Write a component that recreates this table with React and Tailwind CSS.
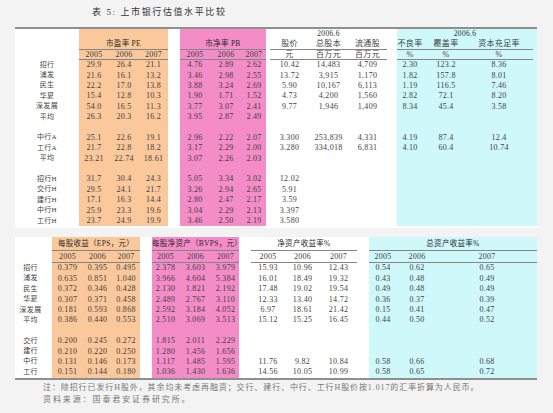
import React from 'react';

const E = ['', '', ''];
const ROW = 'h-[10.4px]';

const topRows = Array(16).fill(ROW);
const botRows = Array(11).fill(ROW);

const topLabels = ['招行', '浦发', '民生', '华夏', '深发展', '平均', '', '中行A', '工行A', '平均', '', '招行H', '交行H', '建行H', '中行H', '工行H'];
const botLabels = ['招行', '浦发', '民生', '华夏', '深发展', '平均', '', '交行', '建行', '中行', '工行'];

const pe = [
  ['29.9', '26.4', '21.1'], ['21.6', '16.1', '13.2'], ['22.2', '17.0', '13.8'], ['15.4', '12.8', '10.3'],
  ['54.0', '16.5', '11.3'], ['26.3', '20.3', '16.2'], E, ['25.1', '22.6', '19.1'], ['21.7', '22.8', '18.2'],
  ['23.21', '22.74', '18.61'], E, ['31.7', '30.4', '24.3'], ['29.5', '24.1', '21.7'], ['17.1', '16.3', '14.4'],
  ['25.9', '23.3', '19.6'], ['23.7', '24.9', '19.9'],
];
const pb = [
  ['4.76', '2.89', '2.62'], ['3.46', '2.98', '2.55'], ['3.88', '3.24', '2.69'], ['1.90', '1.71', '1.52'],
  ['3.77', '3.07', '2.41'], ['3.95', '2.87', '2.49'], E, ['2.96', '2.22', '2.07'], ['3.17', '2.29', '2.00'],
  ['3.07', '2.26', '2.03'], E, ['5.05', '3.34', '3.02'], ['3.26', '2.94', '2.65'], ['2.80', '2.47', '2.17'],
  ['3.04', '2.29', '2.13'], ['3.46', '2.50', '2.19'],
];
const shares = [
  ['10.42', '14,483', '4,709'], ['13.72', '3,915', '1,170'], ['5.90', '10,167', '6,113'], ['4.73', '4,200', '1,560'],
  ['9.77', '1,946', '1,409'], E, E, ['3.300', '253,839', '4,331'], ['3.280', '334,018', '6,831'], E, E,
  ['12.02', '', ''], ['5.91', '', ''], ['3.59', '', ''], ['3.397', '', ''], ['3.580', '', ''],
];
const quality = [
  ['2.30', '123.2', '8.36'], ['1.82', '157.8', '8.01'], ['1.19', '116.5', '7.46'], ['2.82', '72.1', '8.20'],
  ['8.34', '45.4', '3.58'], E, E, ['4.19', '87.4', '12.4'], ['4.10', '60.4', '10.74'], E, E, E, E, E, E, E,
];

const eps = [
  ['0.379', '0.395', '0.495'], ['0.635', '0.851', '1.040'], ['0.372', '0.346', '0.428'], ['0.307', '0.371', '0.458'],
  ['0.181', '0.593', '0.868'], ['0.386', '0.440', '0.553'], E, ['0.200', '0.245', '0.272'], ['0.210', '0.220', '0.250'],
  ['0.131', '0.146', '0.173'], ['0.151', '0.144', '0.180'],
];
const bvps = [
  ['2.378', '3.603', '3.979'], ['3.966', '4.604', '5.384'], ['2.130', '1.821', '2.192'], ['2.489', '2.767', '3.110'],
  ['2.592', '3.184', '4.052'], ['2.510', '3.069', '3.513'], E, ['1.815', '2.011', '2.229'], ['1.280', '1.456', '1.656'],
  ['1.117', '1.485', '1.595'], ['1.036', '1.430', '1.636'],
];
const roe = [
  ['15.93', '10.96', '12.43'], ['16.01', '18.49', '19.32'], ['17.48', '19.02', '19.54'], ['12.33', '13.40', '14.72'],
  ['6.97', '18.61', '21.42'], ['15.12', '15.25', '16.45'], E, E, E, ['11.76', '9.82', '10.84'], ['14.56', '10.05', '10.99'],
];
const roa = [
  ['0.54', '0.62', '0.65'], ['0.43', '0.48', '0.49'], ['0.49', '0.48', '0.49'], ['0.36', '0.37', '0.39'],
  ['0.15', '0.41', '0.47'], ['0.44', '0.50', '0.52'], E, E, E, ['0.58', '0.66', '0.68'], ['0.58', '0.65', '0.72'],
];

const YEARS = ['2005', '2006', '2007'];

// one coloured (or white) column group: header lines + data rows
function Block({ className = '', cols, heads, rows, rowH }) {
  return (
    <div className={`shrink-0 ${className}`}>
      {heads.map(([h, content, line], i) => (
        <div key={i} className={`${h} flex items-center ${line ? 'border-b border-[#858585]' : ''}`}>
          {Array.isArray(content) ? (
            content.map((c, j) => (
              <div key={j} className={`${cols[j]} shrink-0 text-center whitespace-nowrap`}>{c}</div>
            ))
          ) : (
            <div className="w-full text-center whitespace-nowrap text-[7.5px] text-[#2b2b2b]">{content}</div>
          )}
        </div>
      ))}
      {rows.map((r, i) => (
        <div key={i} className={`${rowH[i]} flex items-center`}>
          {r.map((c, j) => (
            <div key={j} className={`${cols[j]} shrink-0 text-center whitespace-nowrap`}>{c}</div>
          ))}
        </div>
      ))}
    </div>
  );
}

function Labels({ width, pad, head, labels, rowH }) {
  return (
    <div className={`${width} ${pad} shrink-0`}>
      <div className={head} />
      {labels.map((l, i) => (
        <div key={i} className={`${rowH[i]} flex items-center justify-center text-[7px] whitespace-nowrap`}>{l}</div>
      ))}
    </div>
  );
}

export default function App() {
  const orangeTop = ['w-[30px]', 'w-[30px]', 'w-[29px]'];
  const pinkTop = ['w-[30px]', 'w-[32px]', 'w-[24px]'];
  const whiteTop = ['w-[39px]', 'w-[39px]', 'w-[39px]'];
  const cyanTop = ['w-[26px]', 'w-[46px]', 'w-[60px]'];

  return (
    <div className="w-[553px] h-[413px] overflow-hidden bg-[#f3f3f3] text-[#3f3f3f] text-[8px] leading-none tracking-[0.3px] font-['Liberation_Serif','Noto_Sans_CJK_SC',serif]">
      <div className="h-[18px] pt-[6px] pl-[92px] text-[9px] leading-[12px] tracking-[1.6px] text-[#333]">
        表 5: 上市银行估值水平比较
      </div>

      {/* valuation table */}
      <div className="mt-[9px] ml-[15px] w-[522px] flex bg-white border-t-2 border-[#8f8f8f] pb-[2px]">
        <Labels width="w-[64px]" pad="" head="h-[31px]" labels={topLabels} rowH={topRows} />
        <Block
          className="w-[89px] bg-[#fac89b]"
          cols={orangeTop}
          heads={[['h-[10px]', ''], ['h-[11px]', '市盈率 PE', true], ['h-[10px]', YEARS, true]]}
          rows={pe}
          rowH={topRows}
        />
        <div className="w-[12px] shrink-0" />
        <Block
          className="w-[86px] bg-[#f48cc7]"
          cols={pinkTop}
          heads={[['h-[10px]', ''], ['h-[11px]', '市净率 PB', true], ['h-[10px]', YEARS, true]]}
          rows={pb}
          rowH={topRows}
        />
        <div className="w-[131px] shrink-0 pl-[4px] pr-[10px]">
          <Block
            cols={whiteTop}
            heads={[
              ['h-[10px]', '2006.6'],
              ['h-[11px]', ['股价', '总股本', '流通股'], true],
              ['h-[10px]', ['元', '百万元', '百万元'], true],
            ]}
            rows={shares}
            rowH={topRows}
          />
        </div>
        <Block
          className="w-[140px] bg-[#cff8fb] pr-[4px]"
          cols={cyanTop}
          heads={[
            ['h-[10px]', '2006.6'],
            ['h-[11px]', ['不良率', '覆盖率', '资本充足率'], true],
            ['h-[10px]', ['%', '%', '%'], true],
          ]}
          rows={quality}
          rowH={topRows}
        />
      </div>

      {/* per-share / return table */}
      <div className="mt-[9px] ml-[15px] w-[522px] flex bg-white border-b-2 border-[#8f8f8f]">
        <Labels width="w-[37px]" pad="pr-[6px]" head="h-[26px]" labels={botLabels} rowH={botRows} />
        <Block
          className="w-[88px] bg-[#fac89b]"
          cols={['w-[31px]', 'w-[29px]', 'w-[28px]']}
          heads={[['h-[14px]', '每股收益（EPS，元）', true], ['h-[12px]', YEARS, true]]}
          rows={eps}
          rowH={botRows}
        />
        <div className="w-[12px] shrink-0" />
        <Block
          className="w-[87px] bg-[#f48cc7]"
          cols={['w-[27px]', 'w-[33px]', 'w-[27px]']}
          heads={[['h-[14px]', '每股净资产（BVPS，元）', true], ['h-[12px]', YEARS, true]]}
          rows={bvps}
          rowH={botRows}
        />
        <div className="w-[130px] shrink-0 pl-[12px] pr-[12px]">
          <Block
            cols={['w-[34px]', 'w-[35px]', 'w-[37px]']}
            heads={[['h-[14px]', '净资产收益率%', true], ['h-[12px]', YEARS, true]]}
            rows={roe}
            rowH={botRows}
          />
        </div>
        <Block
          className="w-[168px] bg-[#cff8fb]"
          cols={['w-[28px]', 'w-[40px]', 'w-[100px]']}
          heads={[['h-[14px]', '总资产收益率%', true], ['h-[12px]', YEARS, true]]}
          rows={roa}
          rowH={botRows}
        />
      </div>

      <div className="mt-[2px] pl-[43px] text-[8px] leading-[12px] text-[#777] tracking-[0.9px]">
        <p>注：除招行已发行H股外，其余均未考虑再融资；交行、建行、中行、工行H股价按1.017的汇率折算为人民币。</p>
        <p className="tracking-[1.9px]">资料来源：国泰君安证券研究所。</p>
      </div>
    </div>
  );
}
